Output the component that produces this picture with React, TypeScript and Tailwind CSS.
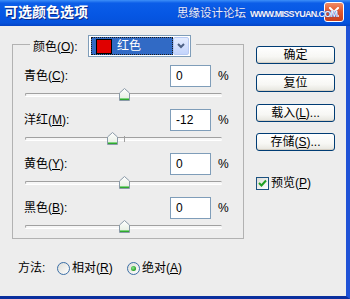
import React from "react";

function Thumb({ left }: { left: number }) {
  return (
    <svg
      className="absolute top-0"
      style={{ left }}
      width="11"
      height="13"
      viewBox="0 0 11 13"
    >
      <defs>
        <linearGradient id="tg" x1="0" y1="0" x2="0" y2="1">
          <stop offset="0" stopColor="#ffffff" />
          <stop offset="1" stopColor="#e3ecdf" />
        </linearGradient>
      </defs>
      <path d="M5.5 0.5 L10.5 5 L10.5 12.5 L0.5 12.5 L0.5 5 Z" fill="url(#tg)" stroke="#8a9aa8" />
      <rect x="1" y="10" width="9" height="1" fill="#7fd47f" />
      <rect x="1" y="11" width="9" height="1" fill="#2fa82f" />
    </svg>
  );
}

function Slider({ value }: { value: number }) {
  const center = 100 + value * 0.985;
  return (
    <div className="relative mt-[1px] h-[13px]">
      <div className="absolute left-[1px] top-[5px] h-[3px] w-[197px] rounded-full border-t border-l border-[#a0a0a0] bg-[#f6f6f6] shadow-[0_1px_0_#ffffff]" />
      <div className="absolute left-[100px] top-[4px] h-[6px] w-px bg-[#a0a0a0]" />
      <Thumb left={Math.round(center - 5.5)} />
    </div>
  );
}

function Row({
  label,
  letter,
  value,
  num,
  last,
}: {
  label: string;
  letter: string;
  value: string;
  num: number;
  last?: boolean;
}) {
  return (
    <div className={last ? "" : "mb-[8px]"}>
      <div className="flex h-[22px] items-center">
        <div className="w-[146px] text-[12px] leading-[16px] text-black">
          {label}(<u>{letter}</u>):
        </div>
        <div className="flex h-[22px] w-[41px] items-center border border-[#7f9db9] bg-white pl-[5px] text-[12px] text-black">
          {value}
        </div>
        <div className="ml-[7px] text-[12px] text-black">%</div>
      </div>
      <Slider value={num} />
    </div>
  );
}

function XPButton({ children, className = "" }: { children: React.ReactNode; className?: string }) {
  return (
    <div
      className={
        "flex h-[18px] w-[79px] items-center justify-center rounded-[3px] border border-[#003c74] bg-[linear-gradient(180deg,#ffffff_0%,#f7f7f4_60%,#e6e5de_100%)] text-[12px] leading-[14px] text-black shadow-[inset_0_-1px_0_#d6d0c5] " +
        className
      }
    >
      {children}
    </div>
  );
}

function Radio({ checked }: { checked?: boolean }) {
  return (
    <svg width="13" height="13" viewBox="0 0 13 13">
      <defs>
        <linearGradient id="rg" x1="0" y1="0" x2="1" y2="1">
          <stop offset="0" stopColor="#dcdcd6" />
          <stop offset="1" stopColor="#ffffff" />
        </linearGradient>
        <radialGradient id="gd" cx="0.4" cy="0.4" r="0.6">
          <stop offset="0" stopColor="#8fe88f" />
          <stop offset="1" stopColor="#1e9a1e" />
        </radialGradient>
      </defs>
      <circle cx="6.5" cy="6.5" r="6" fill="url(#rg)" stroke="#3b6ea5" />
      {checked && <circle cx="6.5" cy="6.5" r="2.5" fill="url(#gd)" />}
    </svg>
  );
}

export default function App() {
  return (
    <div className="flex h-[299px] w-[350px] flex-col overflow-hidden font-['Liberation_Sans','Noto_Sans_CJK_SC',sans-serif]">
      {/* title bar */}
      <div className="relative flex h-[26px] shrink-0 items-start bg-[linear-gradient(180deg,#3d8ff8_0%,#0b5de8_12%,#0657e4_55%,#0552dc_88%,#0443c4_100%)]">
        <div className="ml-[4px] mt-[3px] text-[14px] font-bold leading-[18px] text-white [text-shadow:1px_1px_0_#0b2a8a]">
          可选颜色选项
        </div>
        <div className="ml-auto mr-[6px] mt-[2px] flex h-[20px] w-[20px] items-center justify-center rounded-[3px] border border-white bg-[linear-gradient(180deg,#f08a64_0%,#e25a2f_45%,#c9401c_100%)]">
          <svg width="10" height="10" viewBox="0 0 10 10">
            <path d="M1 1 L9 9 M9 1 L1 9" stroke="#ffffff" strokeWidth="2" strokeLinecap="square" />
          </svg>
        </div>
        <div className="absolute left-[177px] top-[5px] z-10 flex items-center">
          <span className="text-[11.5px] leading-[16px] text-[#e8f0ff] [text-shadow:0_0_1px_#1a3fb0,0_0_1px_#1a3fb0]">
            思缘设计论坛
          </span>
          <span className="ml-[4px] mt-[1px] text-[9px] font-bold leading-[12px] tracking-[-0.7px] text-[#eef4ff] [text-shadow:0_0_1px_#1a3fb0,0_0_1px_#1a3fb0]">
            WWW.MISSYUAN.COM
          </span>
        </div>
      </div>

      {/* body */}
      <div className="flex h-[273px] border-b-[3px] border-r-[4px] border-b-[#0b2f9e] border-r-[#1f52d6] bg-[#ededed]">
        <div className="w-[256px] shrink-0">
          <fieldset className="ml-[12px] mt-[9px] w-[226px] border border-[#b2b2b2] pb-[5px] pl-[11px] pr-[14px] pt-[11px]">
            <legend className="ml-[6px] pl-[3px] pr-[5px]">
              <div className="flex items-start">
                <div className="-mb-[3px] flex h-[22px] w-[55px] items-center pt-[2px] text-[12px] text-black">
                  颜色(<u>O</u>):
                </div>
                <div className="-mb-[3px] flex h-[22px] w-[103px] items-center border border-[#7f9db9] bg-white pl-[2px] pr-[1px]">
                  <div className="flex h-[18px] w-[82px] items-center border border-dotted border-[#1a1a1a] bg-[#316ac5] pl-[4px]">
                    <div className="h-[15px] w-[16px] border border-black bg-[#e00000]" />
                    <span className="ml-[5px] text-[12px] leading-[14px] text-white">红色</span>
                  </div>
                  <div className="ml-auto flex h-[18px] w-[16px] items-center justify-center rounded-[2px] border border-[#b7c9f3] bg-[linear-gradient(180deg,#e3ebfe_0%,#c3d4fc_100%)]">
                    <svg width="8" height="6" viewBox="0 0 8 6">
                      <path d="M1 1 L4 4 L7 1" stroke="#4d6185" strokeWidth="2" fill="none" />
                    </svg>
                  </div>
                </div>
              </div>
            </legend>
            <Row label="青色" letter="C" value="0" num={0} />
            <Row label="洋红" letter="M" value="-12" num={-12} />
            <Row label="黄色" letter="Y" value="0" num={0} />
            <Row label="黑色" letter="B" value="0" num={0} last />
          </fieldset>

          <div className="ml-[18px] mt-[21px] flex h-[16px] items-center text-[12px] text-black">
            <span className="w-[39px]">方法:</span>
            <Radio />
            <span className="ml-[2px] w-[55px]">
              相对(<u>R</u>)
            </span>
            <Radio checked />
            <span className="ml-[2px]">
              绝对(<u>A</u>)
            </span>
          </div>
        </div>

        <div className="flex flex-col pt-[20px]">
          <XPButton>确定</XPButton>
          <XPButton className="mt-[10px]">复位</XPButton>
          <XPButton className="mt-[12px]">
            载入(<u>L</u>)...
          </XPButton>
          <XPButton className="mt-[11px]">
            存储(<u>S</u>)...
          </XPButton>
          <div className="mt-[23px] flex items-center">
            <div className="flex h-[13px] w-[13px] items-center justify-center border border-[#1c5180] bg-[linear-gradient(135deg,#dcdcd6_0%,#ffffff_100%)]">
              <svg width="9" height="9" viewBox="0 0 9 9">
                <path d="M1 4 L3.5 6.5 L8 1.5" stroke="#21a121" strokeWidth="2" fill="none" />
              </svg>
            </div>
            <span className="ml-[2px] text-[12px] text-black">
              预览(<u>P</u>)
            </span>
          </div>
        </div>
      </div>
    </div>
  );
}
